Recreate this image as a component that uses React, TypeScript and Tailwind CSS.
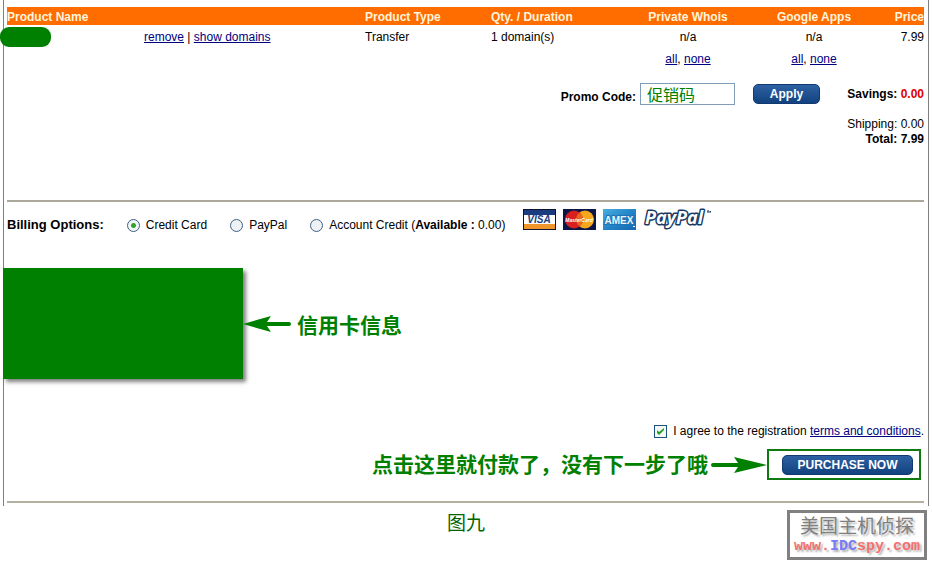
import { useState } from 'react';

const methods = ['Credit Card', 'PayPal', 'Account Credit'];

const linkClass = 'text-[#000080] underline';
const buttonClass =
  'h-5 rounded-[5px] border border-[#123a70] bg-linear-to-b from-[#2d61a3] to-[#12427f] font-bold leading-[18px] text-white';

function AllNone() {
  return (
    <>
      <a href="#" className={linkClass}>all</a>, <a href="#" className={linkClass}>none</a>
    </>
  );
}

function Visa() {
  return (
    <svg width="33" height="21" viewBox="0 0 33 21" aria-label="Visa">
      <rect width="33" height="21" fill="#0b1430" />
      <rect x="1" y="1" width="31" height="19" fill="#fff" />
      <rect x="1" y="1" width="31" height="5" fill="#1c3c80" />
      <rect x="1" y="15" width="31" height="5" fill="#f0952a" />
      <text x="16" y="14" textAnchor="middle" fontSize="10" fontWeight="bold" fontStyle="italic" fill="#1c3c80" fontFamily="Liberation Sans, sans-serif">VISA</text>
    </svg>
  );
}

function MasterCard() {
  return (
    <svg width="33" height="21" viewBox="0 0 33 21" aria-label="MasterCard">
      <rect width="33" height="21" fill="#0b1648" />
      <circle cx="22" cy="10.5" r="9" fill="#f5a81c" />
      <circle cx="11" cy="10.5" r="9" fill="#d8201e" />
      <path d="M16.5 3.5a9 9 0 0 1 0 14a9 9 0 0 1 0-14z" fill="#e8641e" />
      <text x="16" y="13" textAnchor="middle" fontSize="5" fontWeight="bold" fontStyle="italic" fill="#fff" fontFamily="Liberation Sans, sans-serif">MasterCard</text>
    </svg>
  );
}

function Amex() {
  return (
    <svg width="33" height="21" viewBox="0 0 33 21" aria-label="American Express">
      <defs>
        <linearGradient id="amex" x1="0" y1="0" x2="1" y2="1">
          <stop offset="0" stopColor="#49aede" />
          <stop offset="0.5" stopColor="#2585c8" />
          <stop offset="1" stopColor="#1568b0" />
        </linearGradient>
      </defs>
      <rect width="33" height="21" fill="url(#amex)" />
      <text x="16" y="15" textAnchor="middle" fontSize="10" fontWeight="bold" stroke="#1d73b8" strokeWidth="2" paintOrder="stroke" fill="#eaf6fd" fontFamily="Liberation Sans, sans-serif">AMEX</text>
      <rect x="30" y="17" width="2" height="1" fill="#fff" />
    </svg>
  );
}

function PayPalLogo() {
  return (
    <svg width="72" height="24" viewBox="0 0 72 24" className="overflow-visible" aria-label="PayPal">
      <text x="2" y="15" fontSize="18" fontWeight="bold" fontStyle="italic" fill="#fff" stroke="#173a66" strokeWidth="3" strokeLinejoin="round" paintOrder="stroke" fontFamily="Open Sans, sans-serif">PayPal</text>
      <path d="M64 2h2M65 2v2M67 4v-2l1 1" stroke="#173a66" fill="none" />
    </svg>
  );
}

function Watermark() {
  return (
    <div className="w-[140px] border-[3px] border-[#808080] bg-white text-center text-shadow-[2px_2px_2px_#0000004d]">
      <div className="font-[Noto_Sans_CJK_SC,sans-serif] text-[19px] leading-6 text-[#808080]">美国主机侦探</div>
      <div className="font-[Liberation_Mono,monospace] text-[15px] leading-5 font-bold text-[#f47070]">
        www.<span className="text-[#7a7af5]">IDC</span>spy.com
      </div>
    </div>
  );
}

export default function App() {
  const [method, setMethod] = useState('Credit Card');
  const [promo, setPromo] = useState('促销码');
  const [agree, setAgree] = useState(true);

  return (
    <div className="bg-white font-[Liberation_Sans,Noto_Sans_CJK_SC,sans-serif] text-xs text-black">
      <main className="mx-[3px] border-x border-[#808080] pt-[7px] pr-1 pb-[3px] pl-[3px]">
        <table className="w-full table-fixed border-collapse">
          <colgroup>
            <col className="w-[137px]" />
            <col />
            <col className="w-[126px]" />
            <col className="w-[134px]" />
            <col className="w-[126px]" />
            <col className="w-[126px]" />
            <col className="w-[47px]" />
          </colgroup>
          <thead>
            <tr className="h-[18px] bg-[#ff6c00] text-left text-[#fff5dc]">
              <th colSpan={2} className="pt-[2px] leading-4">Product Name</th>
              <th className="pt-[2px] leading-4">Product Type</th>
              <th className="pt-[2px] leading-4">Qty. / Duration</th>
              <th className="pt-[2px] text-center leading-4">Private Whois</th>
              <th className="pt-[2px] text-center leading-4">Google Apps</th>
              <th className="pt-[2px] text-right leading-4">Price</th>
            </tr>
          </thead>
          <tbody>
            <tr className="h-6">
              <td><div className="-ml-[7px] h-5 w-[51px] rounded-[9px] bg-[#008000]" /></td>
              <td>
                <a href="#" className={linkClass}>remove</a> | <a href="#" className={linkClass}>show domains</a>
              </td>
              <td>Transfer</td>
              <td>1 domain(s)</td>
              <td className="text-center">n/a</td>
              <td className="text-center">n/a</td>
              <td className="text-right">7.99</td>
            </tr>
            <tr className="h-5">
              <td colSpan={4} />
              <td className="text-center"><AllNone /></td>
              <td className="text-center"><AllNone /></td>
              <td />
            </tr>
          </tbody>
        </table>

        <section className="flex items-start justify-end pt-[14px]">
          <label htmlFor="promo" className="mr-1 pt-[6px] font-bold">Promo Code:</label>
          <input
            id="promo"
            value={promo}
            onChange={(e) => setPromo(e.target.value)}
            className="mr-[18px] h-[22px] w-[95px] border border-[#7f9db9] px-[6px] text-base leading-5 text-[#008000]"
          />
          <button className={`${buttonClass} mt-px w-[67px]`}>Apply</button>
          <div className="w-[104px] pt-1 text-right leading-[15px]">
            <p className="mb-[15px] font-bold">Savings: <span className="text-[#dd0000]">0.00</span></p>
            <p>Shipping: 0.00</p>
            <p className="font-bold">Total: 7.99</p>
          </div>
        </section>

        <hr className="mt-[53px] border-t-2 border-[#aca899]" />

        <section className="flex items-start gap-[23px] pt-[7px]">
          <h2 className="pt-[6px] text-[13px] leading-5 font-bold">Billing Options:</h2>
          {methods.map((m) => (
            <label key={m} className="flex items-center gap-[6px] pt-[6px] leading-5">
              <input
                type="radio"
                name="billing"
                checked={method === m}
                onChange={() => setMethod(m)}
                className="size-[13px] appearance-none rounded-full border border-[#3f6184] bg-[#eef2f4] checked:bg-[radial-gradient(circle,#2fa32f_0_2px,#f2f6f2_3px)]"
              />
              <span>
                {m}
                {m === 'Account Credit' && <> (<b>Available :</b> 0.00)</>}
              </span>
            </label>
          ))}
          <div className="-ml-[5px] flex h-[21px] items-start gap-[7px]">
            <Visa />
            <MasterCard />
            <Amex />
            <PayPalLogo />
          </div>
        </section>

        <section className="mt-[33px] -ml-1 flex items-center">
          <div className="h-[111px] w-60 bg-[#008000] shadow-[3px_3px_4px_#00000080]" />
          <svg width="49" height="18" viewBox="0 0 49 18">
            <path d="M0 9L28 1L24 7H46Q48 7 48 9T46 11H24L28 17Z" fill="#008000" />
          </svg>
          <p className="ml-[5px] pt-1 text-[21px] leading-7 font-bold text-[#008000]">信用卡信息</p>
        </section>

        <label className="mt-[42px] flex items-center justify-end leading-5">
          <span className="relative mr-[6px] size-[13px]">
            <input
              type="checkbox"
              checked={agree}
              onChange={(e) => setAgree(e.target.checked)}
              className="peer block size-[13px] appearance-none border border-[#1c5180] bg-[#f6f8f6]"
            />
            <svg viewBox="0 0 13 13" className="pointer-events-none absolute inset-0 hidden peer-checked:block">
              <path d="M3 5v3l2 2 5-5V3L5 7z" fill="#21a121" />
            </svg>
          </span>
          <span>
            I agree to the registration <a href="#" className={linkClass}>terms and conditions</a>.
          </span>
        </label>

        <div className="mt-2 mr-[3px] flex items-center justify-end">
          <p className="mr-px text-[21px] leading-[30px] font-bold text-[#008000]">点击这里就付款了，没有下一步了哦</p>
          <svg width="58" height="18" viewBox="0 0 58 18">
            <path d="M58 9L25 1L29 7H4Q2 7 2 9T4 11H29L25 17Z" fill="#008000" />
          </svg>
          <div className="flex h-[31px] border-2 border-[#0f7a0f] py-1 pr-[6px] pl-[13px]">
            <button className={`${buttonClass} w-[131px]`}>PURCHASE NOW</button>
          </div>
        </div>

        <hr className="mt-[21px] border-t-2 border-[#b4b1a0]" />
      </main>

      <footer className="grid grid-cols-[1fr_auto_1fr] pt-1 pr-[5px] pl-[5px]">
        <p className="col-start-2 text-[19px] leading-7 text-[#006400]">图九</p>
        <div className="flex justify-end">
          <Watermark />
        </div>
      </footer>
    </div>
  );
}
